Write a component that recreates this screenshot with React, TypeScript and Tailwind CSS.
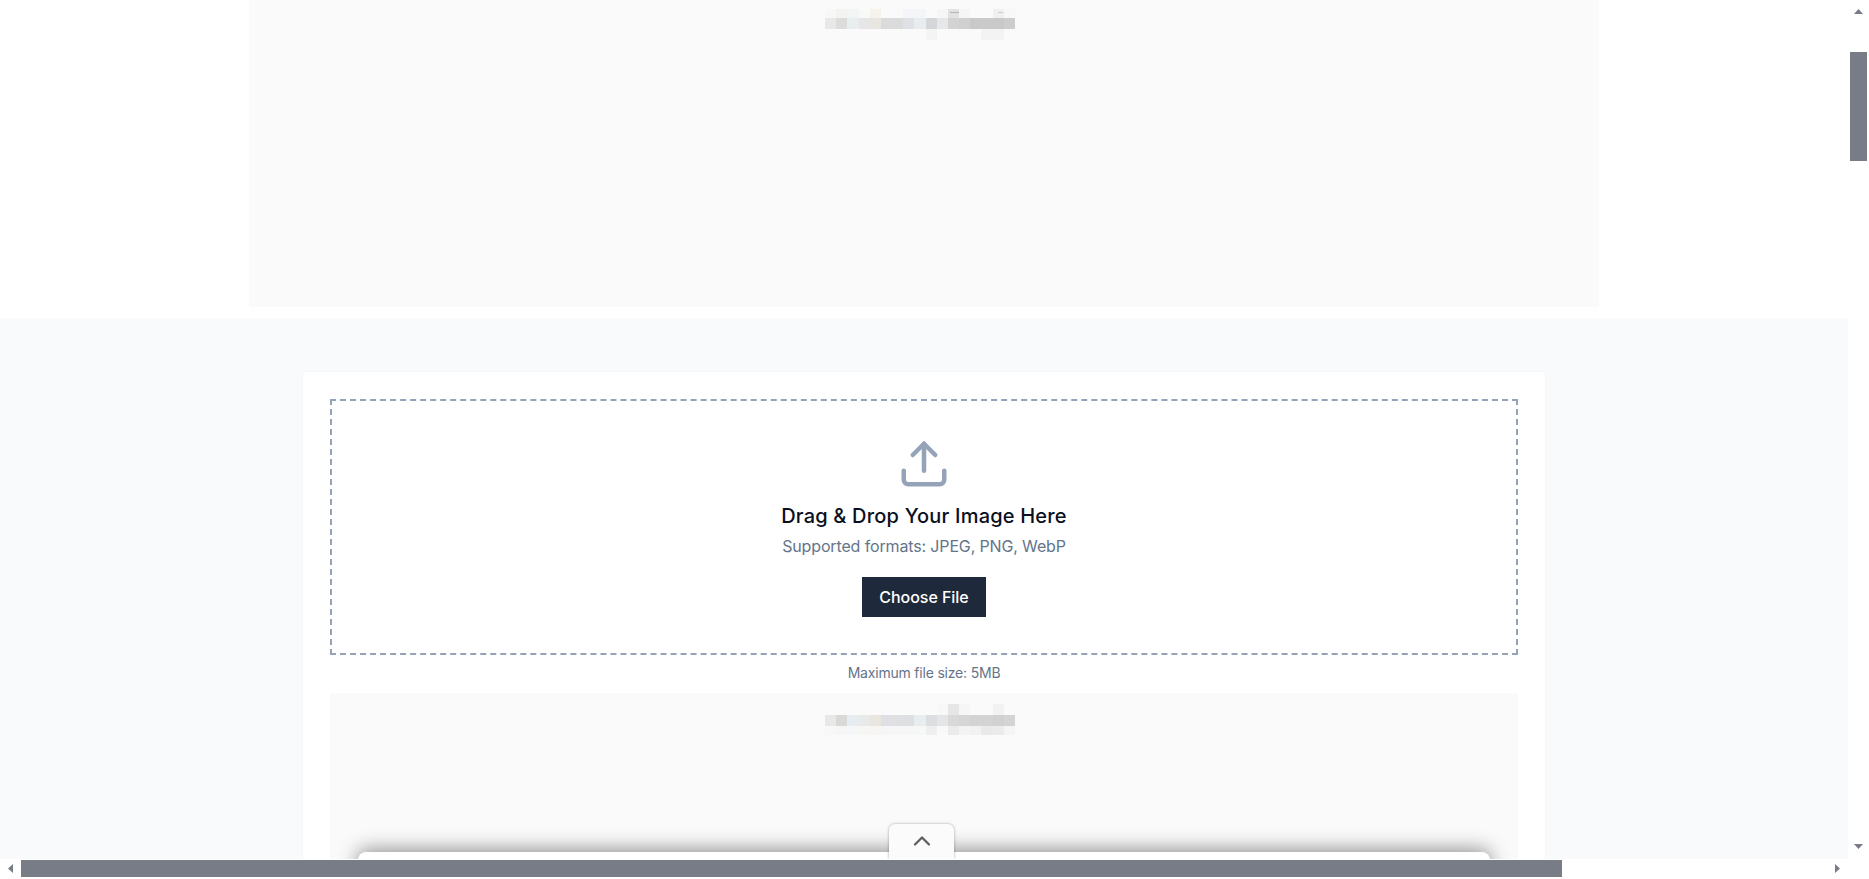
import React from "react";
import { ChevronUp, Upload } from "lucide-react";

const topMosaic = [
  ["#f8f7f5", "#f3f3f2", "#f2f5f4", "#f9f9f8", "#f6f2ec", "#fafafa", "#fafafa", "#f4f5f8", "#f3f6f7", "#fafafa", "#f6f6f7", "#e2e2e2", "#f5f5f5", "#fafafa", "#fafafa", "#f0f0f0", "#f8f8f8"],
  ["#e8e8e8", "#dcdcda", "#e8eeee", "#e6e6e8", "#e9e6e2", "#dadbdb", "#dadbdb", "#dfe1e6", "#e8ecee", "#d5d6d7", "#e6e7ea", "#d3d3d4", "#d0d0d1", "#c9c9ca", "#cacaca", "#c9c9c9", "#cdcdcd"],
  ["#fafafa", "#fafafa", "#fafafa", "#fafafa", "#fafafa", "#fafafa", "#fafafa", "#fafafa", "#fafafa", "#f4f4f4", "#fafafa", "#fafafa", "#fafafa", "#fafafa", "#f3f3f3", "#f3f3f3", "#fafafa"],
];

const lowerMosaic = [
  ["#fafafa", "#fafafa", "#fafafa", "#fafafa", "#fafafa", "#fafafa", "#fafafa", "#fafafa", "#fafafa", "#fafafa", "#f8f8f8", "#e6e6e6", "#f6f6f6", "#fafafa", "#fafafa", "#f2f2f2", "#fafafa"],
  ["#e9e8e6", "#d9d9d8", "#e6ecef", "#e8eae9", "#e9e6e0", "#dee0e3", "#dfe0e2", "#dddfe2", "#e8edf0", "#dcdee0", "#e3e5e9", "#d9d9da", "#d6d6d7", "#d3d3d4", "#d3d3d4", "#d1d1d2", "#d4d4d4"],
  ["#f7f8fa", "#f6f6f6", "#f4f6f7", "#f6f6f5", "#f6f5f3", "#f6f6f6", "#f6f6f7", "#f7f7f7", "#f6f7f7", "#efefef", "#f9f9f9", "#ebebeb", "#f3f3f3", "#f1f1f1", "#e9e9e9", "#ebebeb", "#f5f5f5"],
];

// blurred ad label, drawn as its mosaic cells
const Mosaic = ({ rows, className }: { rows: string[][]; className: string }) => (
  <div className={`grid w-[190px] grid-cols-[repeat(17,1fr)] ${className}`}>
    {rows.flat().map((color, i) => (
      <div key={i} style={{ backgroundColor: color }} />
    ))}
  </div>
);

const Arrow = ({ points, className }: { points: string; className: string }) => (
  <svg width="9" height="9" viewBox="0 0 9 9" className={className}>
    <polygon points={points} fill="#787c87" />
  </svg>
);

export default function App() {
  return (
    <div className="flex h-[879px] w-[1869px] flex-col overflow-hidden bg-white font-['Inter',sans-serif]">
      <div className="flex h-[859px] w-full">
        <main className="relative h-full w-[1848px] overflow-hidden">
          {/* Top ad slot */}
          <div className="h-[318px] pl-[249px]">
            <div className="relative h-[307px] w-[1350px] bg-[#fafafa] pl-[576px] pt-[9px]">
              <Mosaic rows={topMosaic} className="grid-rows-[9px_11px_11px]" />
              <div className="absolute left-[701px] top-[12px] h-px w-[9px] bg-[#b4b4b4]" />
              <div className="absolute left-[749px] top-[12px] h-px w-[5px] bg-[#cccccc]" />
            </div>
          </div>

          {/* Upload section */}
          <section className="h-[541px] bg-[#f8fafc] pl-[303px] pt-[54px]">
            <div className="h-[600px] w-[1242px] bg-white p-[27px] shadow-[0_0_2px_rgba(0,0,0,0.04)]">
              <div className="flex h-[256px] flex-col items-center border-2 border-dashed border-[#94a3b8] pt-9">
                <Upload size={54} strokeWidth={2} className="text-[#94a3b8]" />
                <h3 className="mt-[11px] text-xl font-[550] leading-7 tracking-[0.2px] text-[#0a0f1e]">Drag &amp; Drop Your Image Here</h3>
                <p className="mt-1 text-base leading-6 tracking-[-0.14px] text-[#64748b]">Supported formats: JPEG, PNG, WebP</p>
                <button className="mt-[19px] h-10 w-[124px] bg-[#1e293b] text-base font-[450] tracking-[-0.05px] text-white">Choose File</button>
              </div>
              <p className="mb-[10px] mt-2 text-center text-sm leading-5 tracking-[-0.2px] text-[#64748b]">Maximum file size: 5MB</p>
              <div className="h-[300px] bg-[#fafafa] pl-[495px] pt-[11px]">
                <Mosaic rows={lowerMosaic} className="grid-rows-[11px_11px_9px]" />
              </div>
            </div>
          </section>

          {/* Sticky ad bar peeking from the bottom */}
          <div className="absolute left-[358px] top-[852px] h-[40px] w-[1132px] rounded-t-lg bg-white shadow-[0_-2px_20px_rgba(0,0,0,0.45)]" />
          <div className="absolute left-[889px] top-[824px] flex h-[35px] w-[65px] justify-center rounded-t-md bg-[#fbfbfb] pt-[3px] shadow-[0_0_3px_rgba(0,0,0,0.35)]">
            <ChevronUp size={28} strokeWidth={2} className="text-[#5f5f5f]" />
          </div>
        </main>

        {/* Vertical scrollbar */}
        <div className="flex h-full w-[21px] flex-col items-center bg-white">
          <Arrow points="0,7 4.5,2 9,7" className="mt-[7px] shrink-0" />
          <div className="ml-[2px] mt-[36px] h-[109px] w-[17px] shrink-0 self-start bg-[#787c87]" />
          <Arrow points="0,2 9,2 4.5,7" className="mb-[8px] mt-auto shrink-0" />
        </div>
      </div>

      {/* Horizontal scrollbar */}
      <div className="flex h-5 w-[1848px] items-center bg-white pb-[2px]">
        <Arrow points="7,0 7,9 2,4.5" className="ml-[6px] shrink-0" />
        <div className="ml-[6px] h-[17px] w-[1541px] shrink-0 bg-[#787c87]" />
        <Arrow points="2,0 2,9 7,4.5" className="ml-auto mr-[6px] shrink-0" />
      </div>
    </div>
  );
}
